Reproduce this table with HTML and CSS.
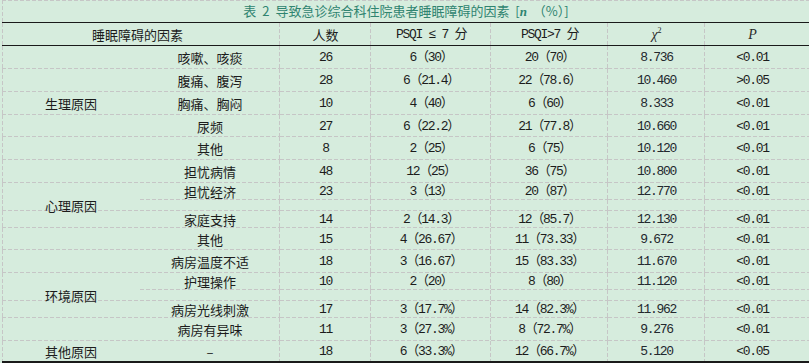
FILE: index.html
```html
<!DOCTYPE html>
<html lang="zh">
<head>
<meta charset="utf-8">
<title>表 2</title>
<link rel="stylesheet" href="styles.css">
</head>
<body>
<div class="sheet">
<table class="tbl">
  <colgroup>
    <col class="w-cat"><col class="w-sub"><col class="w-n"><col class="w-lo"><col class="w-hi"><col class="w-chi"><col class="w-p">
  </colgroup>
  <tr class="r-title">
    <td colspan="7" class="title">表 2 导致急诊综合科住院患者睡眠障碍的因素 [<i class="it">n</i> （%）]</td>
  </tr>
  <tr class="r-head">
    <th colspan="2" class="h-factor">睡眠障碍的因素</th>
    <th class="h-n">人数</th>
    <th class="h-lo num">PSQI ≤ 7 分</th>
    <th class="h-hi num">PSQI&gt;7 分</th>
    <th class="h-chi"><i class="sym">χ</i><sup class="sq">2</sup></th>
    <th class="h-p"><i class="sym">P</i></th>
  </tr>
  <tr class="h23"><td class="cat"></td><td class="sub">咳嗽、咳痰</td><td class="n num">26</td><td class="lo num">6（30）</td><td class="hi num">20（70）</td><td class="chi num">8.736</td><td class="pv num">&lt;0.01</td></tr>
  <tr class="h23"><td class="cat"></td><td class="sub">腹痛、腹泻</td><td class="n num">28</td><td class="lo num">6（21.4）</td><td class="hi num">22（78.6）</td><td class="chi num">10.460</td><td class="pv num">&gt;0.05</td></tr>
  <tr class="h23"><td class="cat">生理原因</td><td class="sub">胸痛、胸闷</td><td class="n num">10</td><td class="lo num">4（40）</td><td class="hi num">6（60）</td><td class="chi num">8.333</td><td class="pv num">&lt;0.01</td></tr>
  <tr class="h22"><td class="cat"></td><td class="sub">尿频</td><td class="n num">27</td><td class="lo num">6（22.2）</td><td class="hi num">21（77.8）</td><td class="chi num">10.660</td><td class="pv num">&lt;0.01</td></tr>
  <tr class="h23"><td class="cat"></td><td class="sub">其他</td><td class="n num">8</td><td class="lo num">2（25）</td><td class="hi num">6（75）</td><td class="chi num">10.120</td><td class="pv num">&lt;0.01</td></tr>
  <tr class="h23"><td class="cat"></td><td class="sub">担忧病情</td><td class="n num">48</td><td class="lo num">12（25）</td><td class="hi num">36（75）</td><td class="chi num">10.800</td><td class="pv num">&lt;0.01</td></tr>
  <tr class="h17"><td class="cat open"></td><td class="sub">担忧经济</td><td class="n num">23</td><td class="lo num">3（13）</td><td class="hi num">20（87）</td><td class="chi num">12.770</td><td class="pv num">&lt;0.01</td></tr>
  <tr class="h11"><td class="cat raised"><div class="lift"><span class="lift-in">心理原因</span></div></td><td class="sub"></td><td class="n"></td><td class="lo"></td><td class="hi"></td><td class="chi"></td><td class="pv"></td></tr>
  <tr class="h17"><td class="cat"></td><td class="sub">家庭支持</td><td class="n num">14</td><td class="lo num">2（14.3）</td><td class="hi num">12（85.7）</td><td class="chi num">12.130</td><td class="pv num">&lt;0.01</td></tr>
  <tr class="h22"><td class="cat"></td><td class="sub">其他</td><td class="n num">15</td><td class="lo num">4（26.67）</td><td class="hi num">11（73.33）</td><td class="chi num">9.672</td><td class="pv num">&lt;0.01</td></tr>
  <tr class="h23"><td class="cat"></td><td class="sub">病房温度不适</td><td class="n num">18</td><td class="lo num">3（16.67）</td><td class="hi num">15（83.33）</td><td class="chi num">11.670</td><td class="pv num">&lt;0.01</td></tr>
  <tr class="h17"><td class="cat open"></td><td class="sub">护理操作</td><td class="n num">10</td><td class="lo num">2（20）</td><td class="hi num">8（80）</td><td class="chi num">11.120</td><td class="pv num">&lt;0.01</td></tr>
  <tr class="h11"><td class="cat raised"><div class="lift"><span class="lift-in">环境原因</span></div></td><td class="sub"></td><td class="n"></td><td class="lo"></td><td class="hi"></td><td class="chi"></td><td class="pv"></td></tr>
  <tr class="h17"><td class="cat"></td><td class="sub">病房光线刺激</td><td class="n num">17</td><td class="lo num">3（17.7%）</td><td class="hi num">14（82.3%）</td><td class="chi num">11.962</td><td class="pv num">&lt;0.01</td></tr>
  <tr class="h23"><td class="cat"></td><td class="sub">病房有异味</td><td class="n num">11</td><td class="lo num">3（27.3%）</td><td class="hi num">8（72.7%）</td><td class="chi num">9.276</td><td class="pv num">&lt;0.01</td></tr>
  <tr class="h20 r-last"><td class="cat">其他原因</td><td class="sub">–</td><td class="n num">18</td><td class="lo num">6（33.3%）</td><td class="hi num">12（66.7%）</td><td class="chi num">5.120</td><td class="pv num">&lt;0.05</td></tr>
</table>
</div>
</body>
</html>
```

FILE: styles.css
```css
:root {
  --dash: #c6c6c6;
  --dh: repeating-linear-gradient(90deg, var(--dash) 0 4px, transparent 4px 6px);
  --dv: repeating-linear-gradient(180deg, var(--dash) 0 4px, transparent 4px 6px);
  --ink: #1c1c1c;
  --rule: #1a1a1a;
}

html, body {
  margin: 0;
  background: #d6ecdd;
  overflow: hidden;
}

.sheet {
  padding-left: 2px;
}

.tbl {
  border-collapse: separate;
  border-spacing: 0;
  table-layout: fixed;
  width: 808px;
  font-family: "Noto Sans CJK SC", sans-serif;
  font-size: 13px;
  line-height: 13px;
  color: var(--ink);
}

.w-cat { width: 138px; }
.w-sub { width: 140px; }
.w-n { width: 91px; }
.w-lo { width: 120px; }
.w-hi { width: 117px; }
.w-chi { width: 97px; }
.w-p { width: 105px; }

.tbl td, .tbl th {
  padding: 0;
  text-align: center;
  font-weight: normal;
  white-space: nowrap;
  overflow: hidden;
}

/* title row */
.title {
  height: 22px;
  color: #2f8470;
  word-spacing: 3px;
}
.it {
  font-family: "Liberation Serif", serif;
  font-weight: bold;
  font-style: italic;
}

/* header */
.r-head th {
  height: 22px;
  border-top: 1px solid var(--rule);
  border-bottom: 1px solid var(--rule);
  background-image: var(--dv);
  background-size: 1px 100%;
  background-position: right top;
  background-repeat: no-repeat;
}
.r-head th.h-factor {
  padding-right: 7px;
  background-image: var(--dv), var(--dv);
  background-size: 1px 100%, 1px 100%;
  background-position: right top, left top;
}
.r-head th.h-p { background-image: none; padding-right: 10px; }
.h-n { padding-left: 5px; }
.h-lo { padding-right: 15px; }
.h-hi { padding-right: 10px; }
.h-chi { padding-right: 17px; }
.sym {
  font-family: "Liberation Serif", serif;
  font-style: italic;
  font-size: 14px;
  color: #2a2a2a;
}
.sq {
  font-family: "Liberation Serif", serif;
  font-size: 8px;
  line-height: 0;
  vertical-align: 6px;
}

/* data cells */
.tbl td {
  background-image: var(--dh), var(--dv);
  background-size: 100% 1px, 1px 100%;
  background-position: left bottom, right top;
  background-repeat: no-repeat;
}
.tbl td.title {
  background-position: left top, left top;
}
.tbl td.cat {
  background-position: left bottom, left top;
}
.tbl td.cat.open {
  background-image: var(--dv);
  background-size: 1px 100%;
  background-position: left top;
}
.tbl td.cat.raised {
  overflow: visible;
}
.tbl td.pv {
  background-image: var(--dh);
  background-size: 100% 1px;
  background-position: left bottom;
  padding-right: 10px;
}

.sub { padding-right: 6px; }
.n { padding-left: 6px; }
.lo { padding-left: 14px; }
.hi { padding-right: 10px; }
.chi { padding-right: 16px; }

.num {
  font-family: "Liberation Mono", "Noto Sans CJK SC", monospace;
  letter-spacing: -1.3px;
}
.chi.num { color: #23282e; }

.h23 td { height: 23px; }
.h22 td { height: 22px; }
.h17 td { height: 17px; }
.h11 td { height: 11px; }
.h20 td { height: 20px; }

.lift {
  height: 11px;
}
.lift-in {
  display: block;
  line-height: 13px;
  margin-top: -3px;
}

/* last row */
.r-last td {
  border-bottom: 2px solid var(--rule);
  background-image: var(--dv);
  background-size: 1px 100%;
  background-position: right top;
}
.r-last td.cat {
  background-position: left top;
}
.r-last td.pv {
  background-image: none;
}
```
